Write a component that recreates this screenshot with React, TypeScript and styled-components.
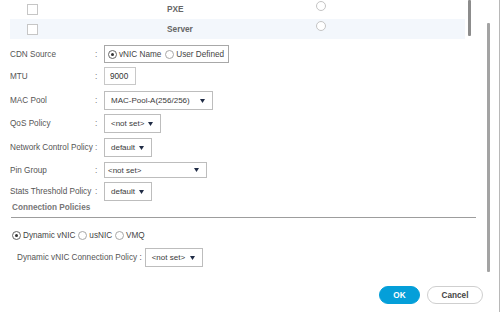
import React from "react";
import styled, { createGlobalStyle } from "styled-components";

const GlobalStyle = createGlobalStyle`
  html, body { margin: 0; padding: 0; background: #fff; }
  body { font-family: "Liberation Sans", Arial, sans-serif; color: #555; }
  * { box-sizing: border-box; }
`;

const Page = styled.div`
  display: flex;
  width: 500px;
  height: 312px;
  overflow: hidden;
  background: #fff;
  border-right: 1px solid #b8b8b8;
`;

const Main = styled.div`
  width: 486px;
  display: flex;
  flex-direction: column;
  padding-left: 10px;
`;

const OuterTrack = styled.div`
  width: 13px;
  padding-top: 23px;
  padding-left: 1px;
`;

const OuterThumb = styled.div`
  width: 3px;
  height: 249px;
  background: #a3a3a3;
  border-radius: 1px;
`;

const ListArea = styled.div`
  display: flex;
  height: 40px;
  gap: 3px;
`;

const ListRows = styled.div`
  width: 455px;
  overflow: hidden;
  display: flex;
  flex-direction: column;
`;

const InnerThumb = styled.div`
  width: 3px;
  height: 36px;
  background: #8c8c8c;
  border-radius: 1px;
`;

const ListRow = styled.div<{ $striped?: boolean }>`
  flex: none;
  height: 20px;
  display: grid;
  grid-template-columns: 17px 11px 129px 149px 10px;
  align-items: center;
  background: ${(p) => (p.$striped ? "#f3f7fc" : "transparent")};
  &:first-child {
    margin-top: -1px;
  }
`;

const CheckBox = styled.span`
  grid-column: 2;
  width: 11px;
  height: 11px;
  border: 1px solid #c6c6c6;
  background: #fff;
`;

const RowName = styled.span`
  grid-column: 4;
  font-size: 8.3px;
  font-weight: bold;
  color: #666;
`;

const ListRadio = styled.span`
  grid-column: 5;
  align-self: start;
  margin-top: 2px;
  width: 10px;
  height: 10px;
  border: 1px solid #c4c4c4;
  border-radius: 50%;
  background: #fff;
`;

const Form = styled.div`
  display: flex;
  flex-direction: column;
  margin-top: 5px;
`;

const Field = styled.div<{ $gap: number }>`
  display: grid;
  grid-template-columns: 83px 11px auto;
  align-items: center;
  margin-top: ${(p) => p.$gap}px;
`;

const Label = styled.span`
  font-size: 8.2px;
  color: #555;
  white-space: nowrap;
`;

const Colon = styled.span`
  font-size: 8.2px;
  color: #777;
  padding-left: 2px;
`;

const OptionBox = styled.div`
  justify-self: start;
  display: flex;
  align-items: center;
  gap: 4px;
  height: 18px;
  width: 125px;
  border: 1px solid #a8a8a8;
  padding-left: 3px;
`;

const RadioOption = styled.span`
  display: inline-flex;
  align-items: center;
  gap: 2px;
  font-size: 8.2px;
  color: #444;
  white-space: nowrap;
`;

const Radio = styled.span<{ $checked?: boolean }>`
  position: relative;
  flex: none;
  width: 9px;
  height: 9px;
  border-radius: 50%;
  border: 1px solid ${(p) => (p.$checked ? "#666" : "#a8a8a8")};
  background: #fff;
  &::after {
    content: "";
    display: ${(p) => (p.$checked ? "block" : "none")};
    position: absolute;
    left: 2px;
    top: 2px;
    width: 3px;
    height: 3px;
    border-radius: 50%;
    background: #333;
  }
`;

const TextInput = styled.div`
  justify-self: start;
  display: flex;
  align-items: center;
  width: 32px;
  height: 18px;
  border: 1px solid #c8c8c8;
  padding-left: 5px;
  font-size: 8.2px;
  color: #333;
`;

const Select = styled.div<{ $w: number; $h?: number; $pad?: number }>`
  justify-self: start;
  display: flex;
  align-items: center;
  justify-content: space-between;
  width: ${(p) => p.$w}px;
  height: ${(p) => p.$h ?? 19}px;
  border: 1px solid #bdbdbd;
  padding: 0 7px 0 ${(p) => p.$pad ?? 6}px;
  font-size: 8px;
  color: #3a3a3a;
  white-space: nowrap;
  background: #fff;
`;

const Heading = styled.div`
  margin-top: 1px;
  padding-left: 2px;
  line-height: 11px;
  font-size: 8.2px;
  font-weight: bold;
  color: #777;
`;

const Divider = styled.div`
  margin-top: 4px;
  margin-left: 1px;
  width: 465px;
  height: 1px;
  background: #9d9d9d;
`;

const RadioRow = styled.div`
  margin-top: 12px;
  height: 10px;
  padding-left: 2px;
  display: flex;
  align-items: center;
  gap: 3px;
`;

const DynRow = styled.div`
  margin-top: 8px;
  padding-left: 7px;
  display: flex;
  align-items: center;
  gap: 3px;
`;

const Footer = styled.div`
  margin-top: 19px;
  display: flex;
  justify-content: flex-end;
  gap: 7px;
  padding-right: 3px;
`;

const Button = styled.button<{ $primary?: boolean }>`
  height: 18px;
  width: ${(p) => (p.$primary ? 41 : 56)}px;
  border-radius: 9px;
  border: 1px solid ${(p) => (p.$primary ? "#049fd9" : "#cfcfcf")};
  background: ${(p) => (p.$primary ? "#049fd9" : "#fff")};
  color: ${(p) => (p.$primary ? "#fff" : "#444")};
  font-family: "Liberation Sans", Arial, sans-serif;
  font-size: 8.2px;
  font-weight: bold;
  padding: 0;
  cursor: pointer;
`;

const Arrow = () => (
  <svg width="5" height="4" viewBox="0 0 5 4">
    <path d="M0 0 L5 0 L2.5 4 Z" fill="#1f2b45" />
  </svg>
);

const rows = [
  { name: "PXE", striped: false },
  { name: "Server", striped: true },
];

export default function App() {
  return (
    <>
      <GlobalStyle />
      <Page>
        <Main>
          <ListArea>
            <ListRows>
              {rows.map((r) => (
                <ListRow key={r.name} $striped={r.striped}>
                  <CheckBox />
                  <RowName>{r.name}</RowName>
                  <ListRadio />
                </ListRow>
              ))}
            </ListRows>
            <InnerThumb />
          </ListArea>

          <Form>
            <Field $gap={0}>
              <Label>CDN Source</Label>
              <Colon>:</Colon>
              <OptionBox>
                <RadioOption>
                  <Radio $checked />
                  vNIC Name
                </RadioOption>
                <RadioOption>
                  <Radio />
                  User Defined
                </RadioOption>
              </OptionBox>
            </Field>
            <Field $gap={4}>
              <Label>MTU</Label>
              <Colon>:</Colon>
              <TextInput>9000</TextInput>
            </Field>
            <Field $gap={6}>
              <Label>MAC Pool</Label>
              <Colon>:</Colon>
              <Select $w={109}>
                MAC-Pool-A(256/256) <Arrow />
              </Select>
            </Field>
            <Field $gap={4}>
              <Label>QoS Policy</Label>
              <Colon>:</Colon>
              <Select $w={57}>
                &lt;not set&gt; <Arrow />
              </Select>
            </Field>
            <Field $gap={5}>
              <Label>Network Control Policy</Label>
              <Colon>:</Colon>
              <Select $w={48}>
                default <Arrow />
              </Select>
            </Field>
            <Field $gap={5}>
              <Label>Pin Group</Label>
              <Colon>:</Colon>
              <Select $w={103} $h={16} $pad={3}>
                &lt;not set&gt; <Arrow />
              </Select>
            </Field>
            <Field $gap={4}>
              <Label>Stats Threshold Policy</Label>
              <Colon>:</Colon>
              <Select $w={48}>
                default <Arrow />
              </Select>
            </Field>
          </Form>

          <Heading>Connection Policies</Heading>
          <Divider />

          <RadioRow>
            <RadioOption>
              <Radio $checked />
              Dynamic vNIC
            </RadioOption>
            <RadioOption>
              <Radio />
              usNIC
            </RadioOption>
            <RadioOption>
              <Radio />
              VMQ
            </RadioOption>
          </RadioRow>

          <DynRow>
            <Label>Dynamic vNIC Connection Policy :</Label>
            <Select $w={58}>
              &lt;not set&gt; <Arrow />
            </Select>
          </DynRow>

          <Footer>
            <Button $primary>OK</Button>
            <Button>Cancel</Button>
          </Footer>
        </Main>
        <OuterTrack>
          <OuterThumb />
        </OuterTrack>
      </Page>
    </>
  );
}
